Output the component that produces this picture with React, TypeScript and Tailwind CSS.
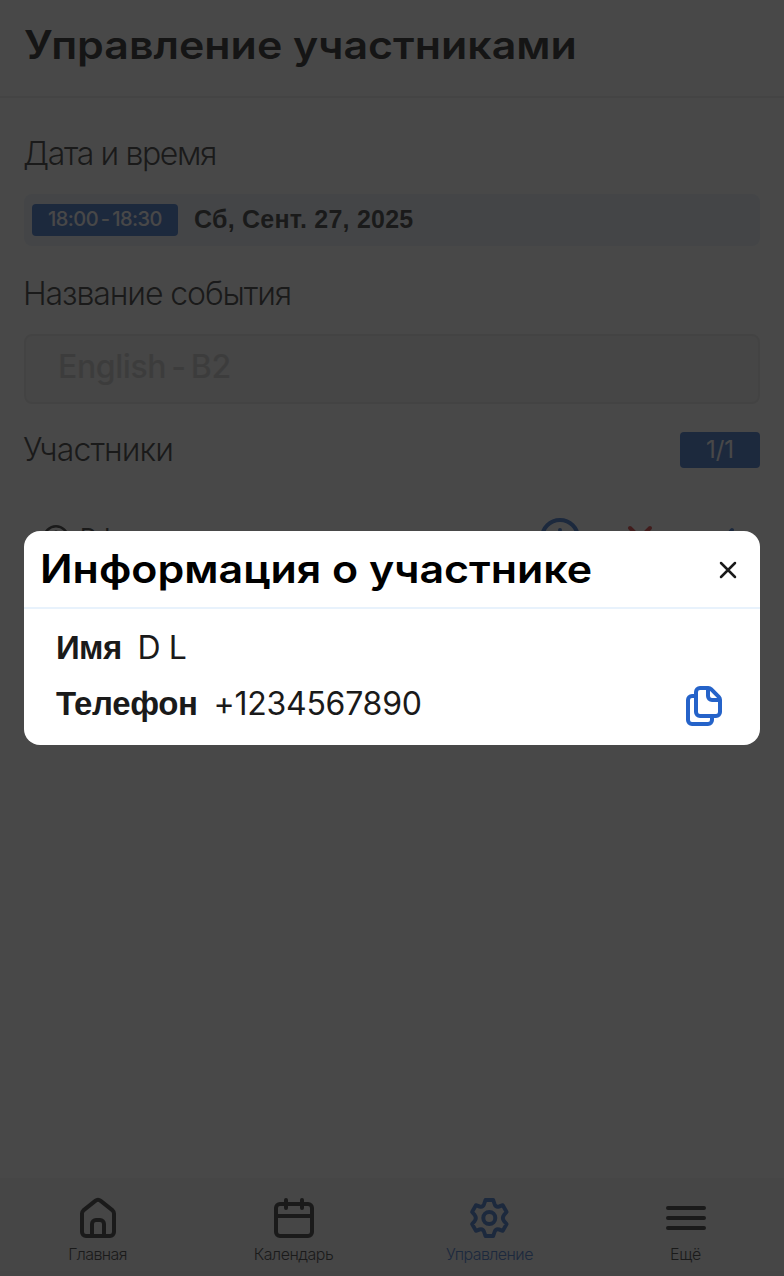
import React from "react";

const label = "font-['Inter',sans-serif] font-light text-[32px] leading-[40px] text-[#1a1a1a] whitespace-nowrap";

function HomeIcon() {
  return (
    <svg width="48" height="48" viewBox="0 0 48 48" fill="none" stroke="currentColor" strokeWidth="4" strokeLinejoin="round">
      <path d="M8 19.500c0-1.200.5-2.300 1.400-3.100L21.300 6.900a4.200 4.200 0 0 1 5.400 0l11.900 9.500A4.200 4.200 0 0 1 40 19.500V38a4 4 0 0 1-4 4H12a4 4 0 0 1-4-4Z" />
      <path d="M18 42V30a4 4 0 0 1 4-4h4a4 4 0 0 1 4 4v12" />
    </svg>
  );
}

function CalendarIcon() {
  return (
    <svg width="48" height="48" viewBox="0 0 48 48" fill="none" stroke="currentColor" strokeWidth="4" strokeLinecap="round">
      <rect x="6" y="10" width="36" height="32" rx="4" />
      <path d="M6 22h36M16 6v8M32 6v8" />
    </svg>
  );
}

function GearIcon() {
  return (
    <svg width="48" height="48" viewBox="0 0 48 48" fill="none" stroke="currentColor" strokeWidth="4" strokeLinejoin="round">
      <circle cx="23.300" cy="24" r="6" />
      <path transform="translate(.3 0) scale(.96 1)" d="M20 6h8l1.500 4.200q1.300 3.200 4.700 2.300L38 11.200l4 6.800-2.700 2.900q-2.500 3.100 0 6.200L42 30l-4 6.800-3.800-1.300q-3.400-.9-4.700 2.300L28 42h-8l-1.500-4.200q-1.300-3.200-4.700-2.300L10 36.800 6 30l2.700-2.900q2.500-3.100 0-6.200L6 18l4-6.800 3.800 1.300q3.400.9 4.700-2.300Z" />
    </svg>
  );
}

function MenuIcon() {
  return (
    <svg width="48" height="48" viewBox="0 0 48 48" fill="none" stroke="currentColor" strokeWidth="4" strokeLinecap="round">
      <path d="M6 14h36M6 24h36M6 34h36" />
    </svg>
  );
}

function CopyIcon() {
  return (
    <svg width="48" height="48" viewBox="0 0 48 48" fill="none" stroke="#2563c9" strokeWidth="4" strokeLinejoin="round">
      <path d="M20 6h8.300a4 4 0 0 1 2.800 1.200l7.700 7.700a4 4 0 0 1 1.200 2.800V30a4 4 0 0 1-4 4H20a4 4 0 0 1-4-4V10a4 4 0 0 1 4-4Z" />
      <path d="M28 6.500V14a4 4 0 0 0 4 4h7.500" />
      <path d="M16 14h-4a4 4 0 0 0-4 4v20a4 4 0 0 0 4 4h16a4 4 0 0 0 4-4v-4" />
    </svg>
  );
}

const tabs = [
  { name: "Главная", icon: <HomeIcon />, color: "text-[#1a1a1a]", tracking: "tracking-[-0.6px]" },
  { name: "Календарь", icon: <CalendarIcon />, color: "text-[#1a1a1a]", tracking: "tracking-[-0.5px]" },
  { name: "Управление", icon: <GearIcon />, color: "text-[#2563c9]", tracking: "tracking-[-0.55px]" },
  { name: "Ещё", icon: <MenuIcon />, color: "text-[#1a1a1a]", tracking: "tracking-[-0.3px]" },
];

export default function App() {
  return (
    <div className="relative flex h-[1276px] w-[784px] flex-col overflow-hidden bg-white">
      <header className="flex h-[98px] shrink-0 items-start border-b-2 border-[#e8e8e8] px-6 pt-[21px]">
        <h1 className="origin-left scale-x-[1.1] whitespace-nowrap font-['Inter',sans-serif] text-[39px] font-semibold leading-[48px] text-black">Управление участниками</h1>
      </header>

      <main className="flex flex-1 flex-col px-6 pt-[36px]">
        <h2 className={`${label} -ml-px tracking-[-1.4px]`}>Дата и время</h2>
        <div className="mt-[20px] flex h-[52px] items-center rounded-lg bg-[#e8f0fa] px-2">
          <div className="flex h-8 w-[146px] items-center justify-center rounded bg-[#2563c9] pb-[2px]">
            <span className="whitespace-nowrap font-['Inter',sans-serif] text-[20px] font-medium tracking-[-0.55px] text-white [word-spacing:-2px]">18:00 - 18:30</span>
          </div>
          <span className="ml-4 whitespace-nowrap pb-[2px] font-['Liberation_Sans',sans-serif] text-[25px] font-bold leading-[32px] tracking-[0.23px] text-[#1a1a1a]">Сб, Сент. 27, 2025</span>
        </div>
        <h2 className={`${label} -ml-px mt-[28px] tracking-[-1.1px]`}>Название события</h2>
        <div className="mt-[20px] flex h-[70px] items-center rounded-lg border-2 border-[#e6e6e6] bg-[#f2f2f2] px-8 pb-[4px]">
          <span className="whitespace-nowrap font-['Inter',sans-serif] text-[32px] font-medium leading-[40px] tracking-[-0.4px] text-[#c4c4c4] [word-spacing:-3px]">English - B2</span>
        </div>
        <div className="mt-[26px] flex h-10 items-center justify-between">
          <h2 className={`${label} -ml-px tracking-[-0.9px]`}>Участники</h2>
          <div className="flex h-9 w-20 items-center justify-center rounded bg-[#2563c9]">
            <span className="font-['Inter',sans-serif] text-[24px] leading-[32px] text-white">1/1</span>
          </div>
        </div>
        <div className="mt-[44px] flex h-[48px] items-center">
          <svg className="ml-[19px] text-[#1a1a1a]" width="26" height="26" viewBox="0 0 26 26" fill="none" stroke="currentColor" strokeWidth="2.500">
            <circle cx="13" cy="13" r="11.750" />
            <path d="M13 5.500V13l4 4" />
          </svg>
          <span className="ml-[11px] font-['Inter',sans-serif] text-[24px] text-[#1a1a1a]">D L</span>
          <svg className="ml-auto" width="48" height="48" viewBox="0 0 48 48" fill="none" stroke="#2563c9" strokeWidth="4" strokeLinecap="round">
            <circle cx="24" cy="24" r="18" />
            <path d="M24 16v.1M24 24v9" />
          </svg>
          <svg className="ml-8" width="48" height="48" viewBox="0 0 48 48" fill="none" stroke="#d92525" strokeWidth="4" strokeLinecap="round">
            <path d="M14 14l20 20M34 14L14 34" />
          </svg>
          <svg className="ml-8 mr-4" width="48" height="48" viewBox="0 0 48 48" fill="none" stroke="#2563c9" strokeWidth="4" strokeLinecap="round" strokeLinejoin="round">
            <path d="M12 26l8 8L36 16" />
          </svg>
        </div>
      </main>

      <nav className="grid h-[98px] shrink-0 grid-cols-4 bg-[#f2f2f2] pt-4">
        {tabs.map((tab) => (
          <div key={tab.name} className={`flex flex-col items-center ${tab.color}`}>
            {tab.icon}
            <span className={`-ml-px whitespace-nowrap font-['Inter',sans-serif] text-[16px] font-light leading-[24px] ${tab.tracking}`}>{tab.name}</span>
          </div>
        ))}
      </nav>

      <div className="absolute inset-0 flex items-center justify-center bg-[#1a1a1a]/80 px-6">
        <section className="h-[214px] w-full rounded-2xl bg-white">
          <div className="flex h-[78px] items-center justify-between border-b-2 border-[#e8f2fc] px-4">
            <h2 className="origin-left scale-x-[1.101] whitespace-nowrap font-['Inter',sans-serif] text-[39px] font-semibold leading-[48px] text-black">Информация о участнике</h2>
            <svg className="mt-[2px]" width="32" height="32" viewBox="0 0 32 32" fill="none" stroke="#1a1a1a" strokeWidth="2.500" strokeLinecap="round">
              <path d="M9 9l14 14M23 9L9 23" />
            </svg>
          </div>
          <div className="flex flex-col px-8 pt-[19px] text-[#1a1a1a]">
            <div className="flex h-10 items-center">
              <span className="font-['Liberation_Sans',sans-serif] text-[33px] font-bold tracking-[-0.6px]">Имя</span>
              <span className="ml-4 font-['Inter',sans-serif] text-[32px] tracking-[-0.5px]">D L</span>
            </div>
            <div className="mt-4 flex h-10 items-center">
              <span className="font-['Liberation_Sans',sans-serif] text-[33px] font-bold tracking-[-0.4px]">Телефон</span>
              <span className="ml-4 font-['Inter',sans-serif] text-[32px] tracking-[-0.25px]">+1234567890</span>
              <div className="ml-auto pt-1"><CopyIcon /></div>
            </div>
          </div>
        </section>
      </div>
    </div>
  );
}
